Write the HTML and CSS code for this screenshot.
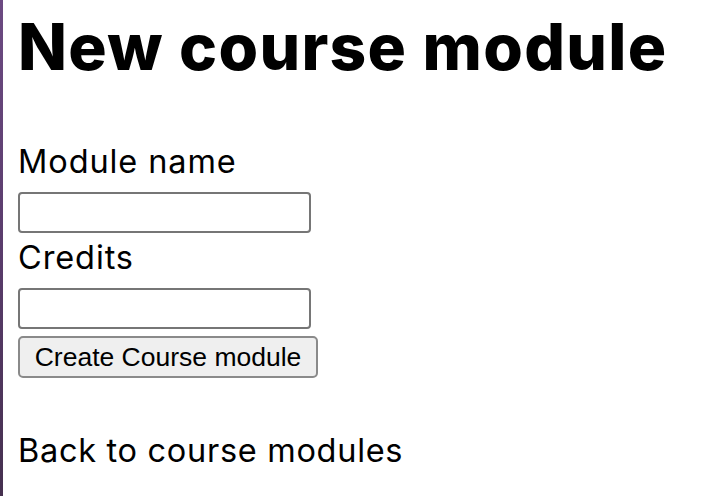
FILE: index.html
```html
<!DOCTYPE html>
<html lang="en">
<head>
<meta charset="utf-8">
<title>New course module</title>
<link rel="stylesheet" href="styles.css">
</head>
<body>
<div class="page">
  <div class="bar"></div>
  <main class="content">
    <h1 class="title">New course module</h1>
    <form class="form">
      <label class="label" for="name">Module name</label>
      <input class="field" id="name" type="text">
      <label class="label label-second" for="credits">Credits</label>
      <input class="field" id="credits" type="text">
      <button class="submit" type="button">Create Course module</button>
    </form>
    <a class="back" href="#">Back to course modules</a>
  </main>
</div>
</body>
</html>
```
FILE: styles.css
```css
html, body {
  margin: 0;
  padding: 0;
  background: #ffffff;
}
.page {
  display: flex;
  min-height: 496px;
}
.bar {
  width: 3px;
  flex: none;
  background: linear-gradient(180deg, #6c4a82 0%, #5a3c6c 50%, #45304f 100%);
}
.content {
  padding-left: 15px;
  display: flex;
  flex-direction: column;
  align-items: flex-start;
  font-family: Inter, "Liberation Sans", sans-serif;
  color: #000;
}
.title {
  margin: 9px 0 0 0;
  font-size: 64px;
  line-height: 76px;
  font-weight: 800;
  letter-spacing: 1.3px;
}
.form {
  margin-top: 54px;
  display: flex;
  flex-direction: column;
  align-items: flex-start;
}
.label {
  font-size: 32.5px;
  line-height: 46px;
  height: 40px;
  letter-spacing: 0.9px;
}
.label-second {
  margin-top: 2px;
}
.field {
  box-sizing: border-box;
  width: 293px;
  height: 41px;
  margin: 13px 0 0 0;
  border: 2px solid #767676;
  border-radius: 4px;
  background: #fff;
  padding: 2px 4px;
}
.submit {
  box-sizing: border-box;
  margin-top: 7px;
  width: 300px;
  height: 42px;
  padding: 0;
  border: 2px solid #8a8a8a;
  border-radius: 5px;
  background: #efefef;
  font-family: "Liberation Sans", Arial, sans-serif;
  font-size: 26.5px;
  color: #000;
}
.back {
  margin-top: 53px;
  font-size: 32.5px;
  line-height: 40px;
  letter-spacing: 0.7px;
  color: #000;
  text-decoration: none;
}
```
